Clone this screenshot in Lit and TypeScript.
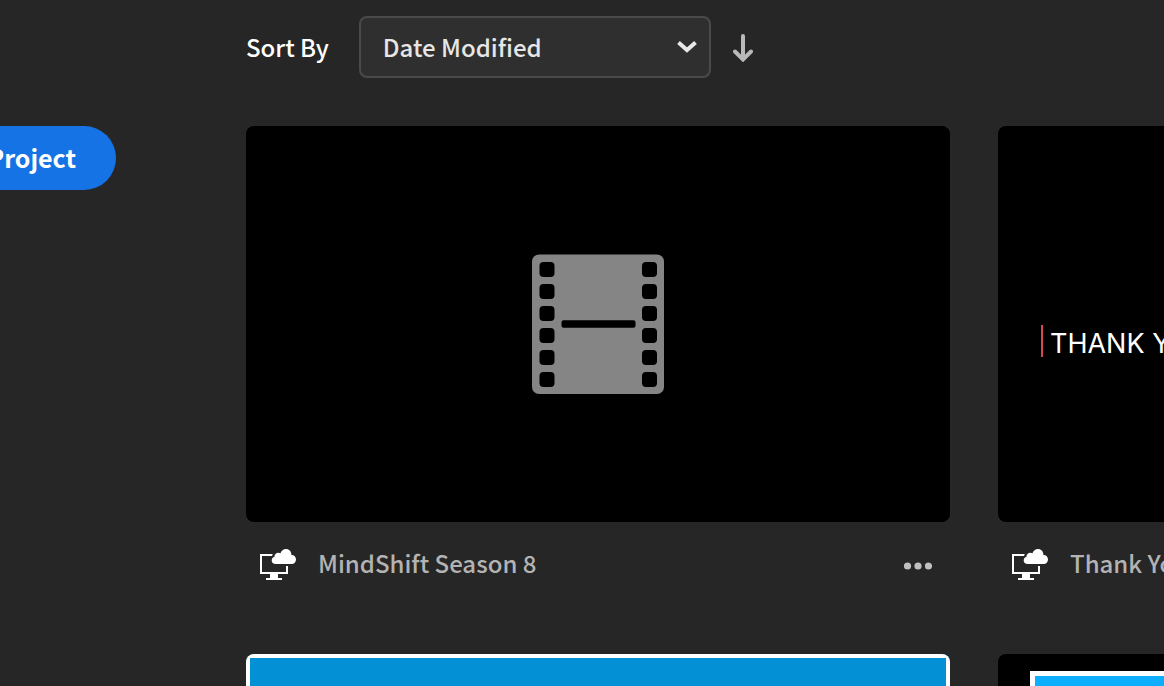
import { LitElement, html, css, svg } from "lit";
import { customElement, property } from "lit/decorators.js";

const holes = [8, 30, 52, 74, 96, 118];

const filmIcon = html`
  <svg width="132" height="140" viewBox="0 0 132 140" aria-hidden="true">
    <rect y="0.5" width="132" height="139.5" rx="7" fill="#858585" />
    ${holes.map(
      (y) => svg`
        <rect x="7.5" y=${y} width="15" height="15" rx="4" />
        <rect x="110" y=${y} width="15" height="15" rx="4" />`
    )}
    <rect x="29.5" y="66.3" width="74" height="7.5" rx="2" />
  </svg>
`;

const cloudMonitorIcon = html`
  <svg width="36" height="32" viewBox="0 0 36 32" aria-hidden="true">
    <path
      d="M12.8 6H0V26H10V30H6V32H22V30H18V26H28V18H26V24H2V8H12Z"
      fill="#fff"
    />
    <path
      d="M15.6 16.1C13.2 16.1 11.7 14.5 11.7 12.5C11.7 10.6 12.9 9.3 14.4 9.1C14.2 6.5 16.2 4.8 18.4 4.8C19.2 4.8 19.9 5 20.5 5.3C21.2 2.6 23.4 .9 26 .9C29.2 .9 31.5 3.4 31.4 7C34.2 6.9 36 9 36 11.5C36 14.1 34.2 16.1 31.6 16.1Z"
      fill="#fff"
    />
  </svg>
`;

@customElement("project-card")
export class ProjectCard extends LitElement {
  static styles = css`
    :host {
      display: block;
      min-width: 0;
    }
    .preview {
      display: grid;
      aspect-ratio: 16 / 9;
      overflow: hidden;
      border-radius: 8px;
      background: #000;
    }
    .meta {
      display: flex;
      align-items: center;
      height: 84px;
      padding: 0 14px;
      gap: 22px;
    }
    .name {
      flex: 1;
      padding-bottom: 2px;
      white-space: nowrap;
      color: #b3b3b3;
    }
    .more {
      display: flex;
      padding: 10px 4px 6px;
      border: 0;
      background: none;
      cursor: pointer;
    }
    svg {
      display: block;
    }
  `;

  @property() name = "";

  render() {
    return html`
      <div class="preview"><slot></slot></div>
      ${this.name
        ? html`<div class="meta">
            ${cloudMonitorIcon}
            <span class="name">${this.name}</span>
            <button class="more" aria-label="More options">
              <svg width="28" height="8" viewBox="0 0 28 8" fill="#c0c0c0">
                <circle cx="3.5" cy="4" r="3.6" />
                <circle cx="14" cy="4" r="3.6" />
                <circle cx="24.5" cy="4" r="3.6" />
              </svg>
            </button>
          </div>`
        : ""}
    `;
  }
}

@customElement("app-root")
export class AppRoot extends LitElement {
  static styles = css`
    :host {
      display: flex;
      gap: 130px;
      height: 100vh;
      overflow: hidden;
      background: #262626;
      color: #fff;
      font-family: "Noto Sans CJK SC", "Noto Sans", sans-serif;
      font-size: 24px;
      font-weight: 500;
      line-height: 32px;
    }
    .side {
      display: flex;
      flex: 0 0 116px;
      min-width: 0;
      justify-content: flex-end;
      align-items: flex-start;
      padding-top: 126px;
    }
    .create {
      flex: none;
      height: 64px;
      padding: 0 40px 2px;
      border: 0;
      border-radius: 32px;
      background: #1673e6;
      color: #fff;
      font: inherit;
      font-size: 25px;
      font-weight: 700;
      cursor: pointer;
    }
    .content {
      flex: 1;
      min-width: 0;
      padding-top: 16px;
    }
    .toolbar {
      display: flex;
      align-items: center;
      margin-bottom: 48px;
    }
    .label {
      margin-right: 30px;
      white-space: nowrap;
    }
    .picker {
      display: grid;
      align-items: center;
      width: 352px;
      margin-right: 18px;
    }
    .picker > * {
      grid-area: 1 / 1;
    }
    .select {
      appearance: none;
      box-sizing: border-box;
      width: 100%;
      height: 62px;
      padding: 0 48px 0 22px;
      border: 2px solid #4a4a4a;
      border-radius: 8px;
      background: #2f2f2f;
      color: #e6e6e6;
      font: inherit;
    }
    .caret {
      justify-self: end;
      margin-right: 14px;
      pointer-events: none;
    }
    .direction {
      display: flex;
      padding: 6px 4px 4px;
      border: 0;
      background: none;
      cursor: pointer;
    }
    .grid {
      display: grid;
      grid-template-columns: repeat(2, minmax(704px, 1fr));
      column-gap: 48px;
      row-gap: 48px;
    }
    .film {
      place-self: center;
      display: flex;
    }
    .title {
      place-self: center start;
      margin: 34px 0 0 43px;
      padding: 6px 0 0 7px;
      border-left: 2px solid #d9484c;
      font-family: Inter, sans-serif;
      font-size: 27px;
      font-weight: 400;
      line-height: 26px;
      white-space: nowrap;
    }
    .framed {
      border: 4px solid #fff;
      background: #0390d4;
    }
    .inset {
      margin: 17px 32px;
      border: 5px solid #fff;
      background: #0eaeff;
    }
  `;

  render() {
    return html`
      <aside class="side">
        <button class="create">Project</button>
      </aside>
      <main class="content">
        <div class="toolbar">
          <label class="label" for="sort">Sort By</label>
          <div class="picker">
            <select class="select" id="sort">
              <option>Date Modified</option>
            </select>
            <svg class="caret" width="20" height="12" viewBox="0 0 20 12" aria-hidden="true">
              <path d="M1.5 1.5 10 9 18.5 1.5" fill="none" stroke="#e8e8e8" stroke-width="4" />
            </svg>
          </div>
          <button class="direction" aria-label="Sort descending">
            <svg width="20" height="28" viewBox="0 0 20 28" fill="none" stroke="#b9b9b9"
              stroke-width="4" stroke-linecap="round">
              <path d="M10 2V25M2 17.5 10 25.5 18 17.5" />
            </svg>
          </button>
        </div>
        <div class="grid">
          <project-card name="MindShift Season 8">
            <div class="film">${filmIcon}</div>
          </project-card>
          <project-card name="Thank You">
            <div class="title">THANK YOU</div>
          </project-card>
          <project-card><div class="framed"></div></project-card>
          <project-card><div class="inset"></div></project-card>
        </div>
      </main>
    `;
  }
}
